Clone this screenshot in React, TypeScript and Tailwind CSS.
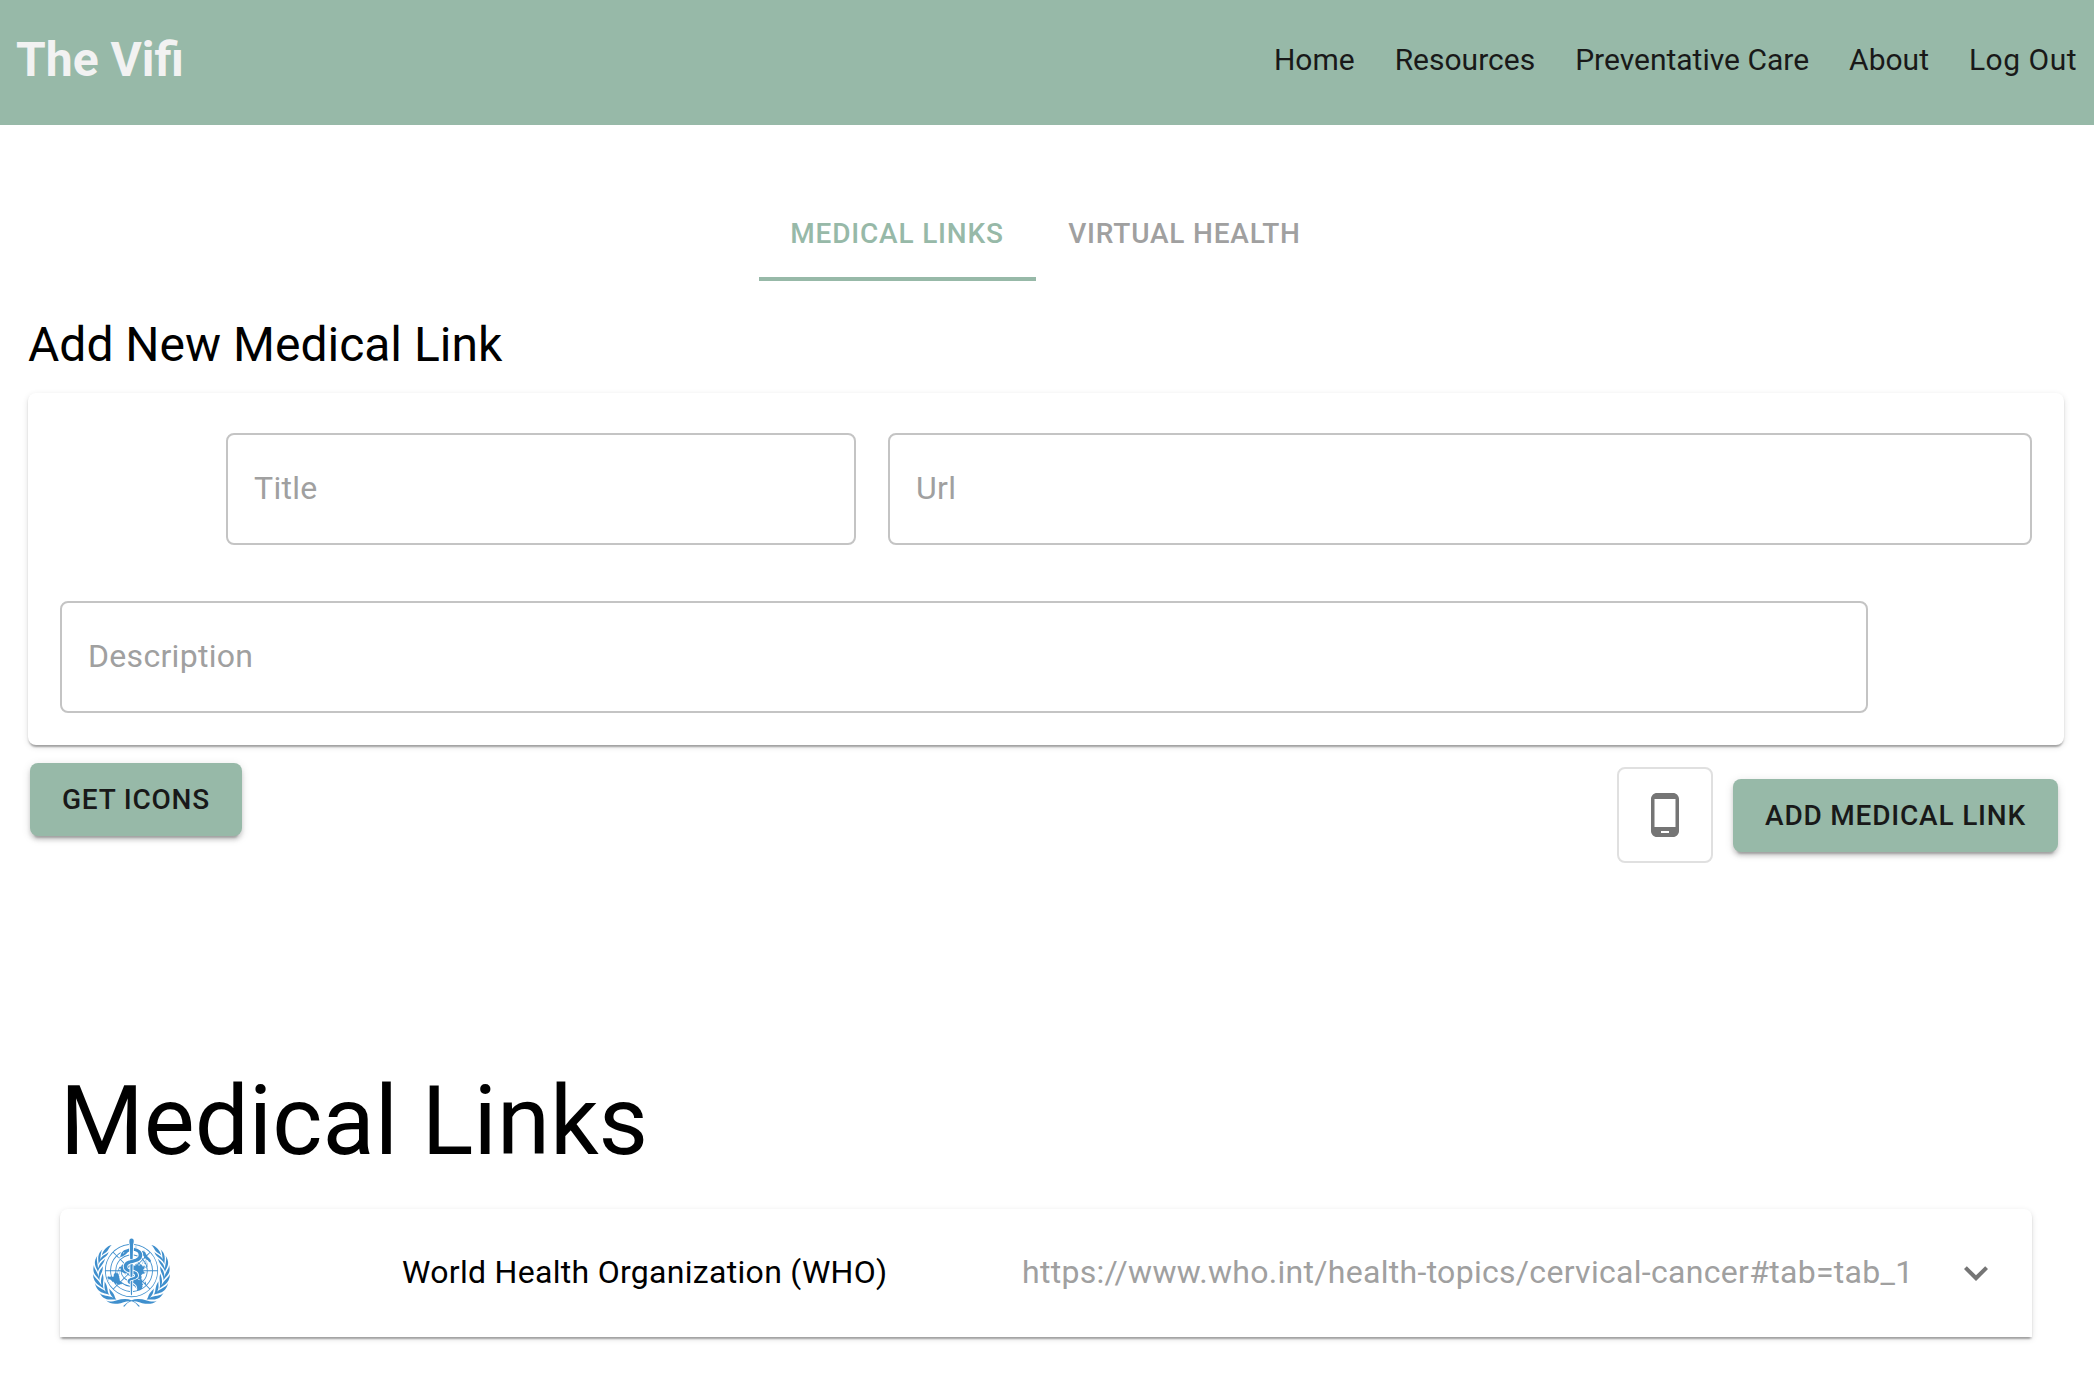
import React from "react";
import { SiWorldhealthorganization } from "react-icons/si";

const navItems = ["Home", "Resources", "Preventative Care", "About"];

function Field({ label, className }: { label: string; className: string }) {
  return (
    <div
      className={`flex h-28 items-center rounded-lg border-2 border-[#c4c4c4] px-[26px] pb-[2px] text-[32px] leading-[38px] tracking-[0.3px] text-[#a0a0a0] ${className}`}
    >
      {label}
    </div>
  );
}

function Button({ children, className }: { children: React.ReactNode; className: string }) {
  return (
    <button
      className={`h-[73px] rounded-lg bg-[#97b9a8] text-[28px] leading-[49px] font-medium tracking-[0.8px] whitespace-nowrap text-[#191919] shadow-[0_6px_2px_-4px_rgba(0,0,0,0.2),0_4px_4px_0_rgba(0,0,0,0.14),0_2px_10px_0_rgba(0,0,0,0.12)] ${className}`}
    >
      {children}
    </button>
  );
}

export default function App() {
  return (
    <div className="h-[1390px] w-[2094px] overflow-hidden bg-white font-['Roboto',sans-serif] text-black">
      <header className="flex h-[125px] items-center justify-between bg-[#97b9a8] pr-[17px] pb-[5px] pl-4">
        <div className="text-[48px] leading-[56px] font-bold text-[#f2f2f2]">The Vifi</div>
        <nav className="flex gap-10 text-[30px] leading-9 text-[#191919]">
          {navItems.map((item) => (
            <a key={item}>{item}</a>
          ))}
          <a className="tracking-[0.5px]">Log Out</a>
        </nav>
      </header>

      <div className="mt-[60px] flex h-24 justify-center pr-[3px] text-[28px] font-medium tracking-[0.8px]">
        <div className="flex w-[277px] items-center justify-center border-b-4 border-[#97b9a8] pt-[5px] text-[#97b9a8]">
          MEDICAL LINKS
        </div>
        <div className="flex w-[297px] items-center justify-center pt-px pl-px text-[#a0a0a0]">
          VIRTUAL HEALTH
        </div>
      </div>

      <section className="mt-9 mr-[30px] ml-7">
        <h2 className="text-[48px] leading-[56px]">Add New Medical Link</h2>
        <div className="mt-5 h-[352px] rounded-lg bg-white px-8 pt-10 shadow-[0_4px_2px_-2px_rgba(0,0,0,0.2),0_2px_2px_0_rgba(0,0,0,0.14),0_2px_6px_0_rgba(0,0,0,0.12)]">
          <div className="flex justify-end gap-8">
            <Field label="Title" className="w-[630px]" />
            <Field label="Url" className="w-[1144px]" />
          </div>
          <Field label="Description" className="mt-14 w-[1808px]" />
        </div>
        <div className="mt-[18px] flex items-start justify-between pr-[6px] pl-[2px]">
          <Button className="w-[212px]">GET ICONS</Button>
          <div className="mt-1 flex items-start gap-5">
            <div className="flex size-24 items-center justify-center rounded-lg border-2 border-[#e0e0e0]">
              <svg viewBox="0 0 24 24" className="size-12 fill-[#757575]">
                <path d="M16 1H8C6.34 1 5 2.34 5 4v16c0 1.66 1.34 3 3 3h8c1.66 0 3-1.34 3-3V4c0-1.66-1.34-3-3-3zm-2 20h-4v-1h4v1zm3.25-3H6.75V4h10.5v14z" />
              </svg>
            </div>
            <Button className="mt-3 w-[325px]">ADD MEDICAL LINK</Button>
          </div>
        </div>
      </section>

      <section className="mt-[202px] mr-[62px] ml-[60px]">
        <h1 className="text-[96px] leading-[112px]">Medical Links</h1>
        <div className="mt-8 flex h-32 items-center rounded-t-lg bg-white pl-[33px] shadow-[0_4px_2px_-2px_rgba(0,0,0,0.2),0_2px_2px_0_rgba(0,0,0,0.14),0_2px_6px_0_rgba(0,0,0,0.12)]">
          <SiWorldhealthorganization className="mb-px size-[77px] text-[#3f8fcd]" />
          <div className="ml-[232px] w-[620px] pb-0.5 text-[32px] leading-[48px] tracking-[0.3px]">
            World Health Organization (WHO)
          </div>
          <div className="w-[930px] pb-0.5 text-[32px] leading-[48px] tracking-[0.3px] text-[#a0a0a0]">
            https://www.who.int/health-topics/cervical-cancer#tab=tab_1
          </div>
          <svg viewBox="0 0 24 24" className="size-12 fill-[#757575]">
            <path d="M16.59 8.59L12 13.17 7.41 8.59 6 10l6 6 6-6z" />
          </svg>
        </div>
      </section>
    </div>
  );
}
